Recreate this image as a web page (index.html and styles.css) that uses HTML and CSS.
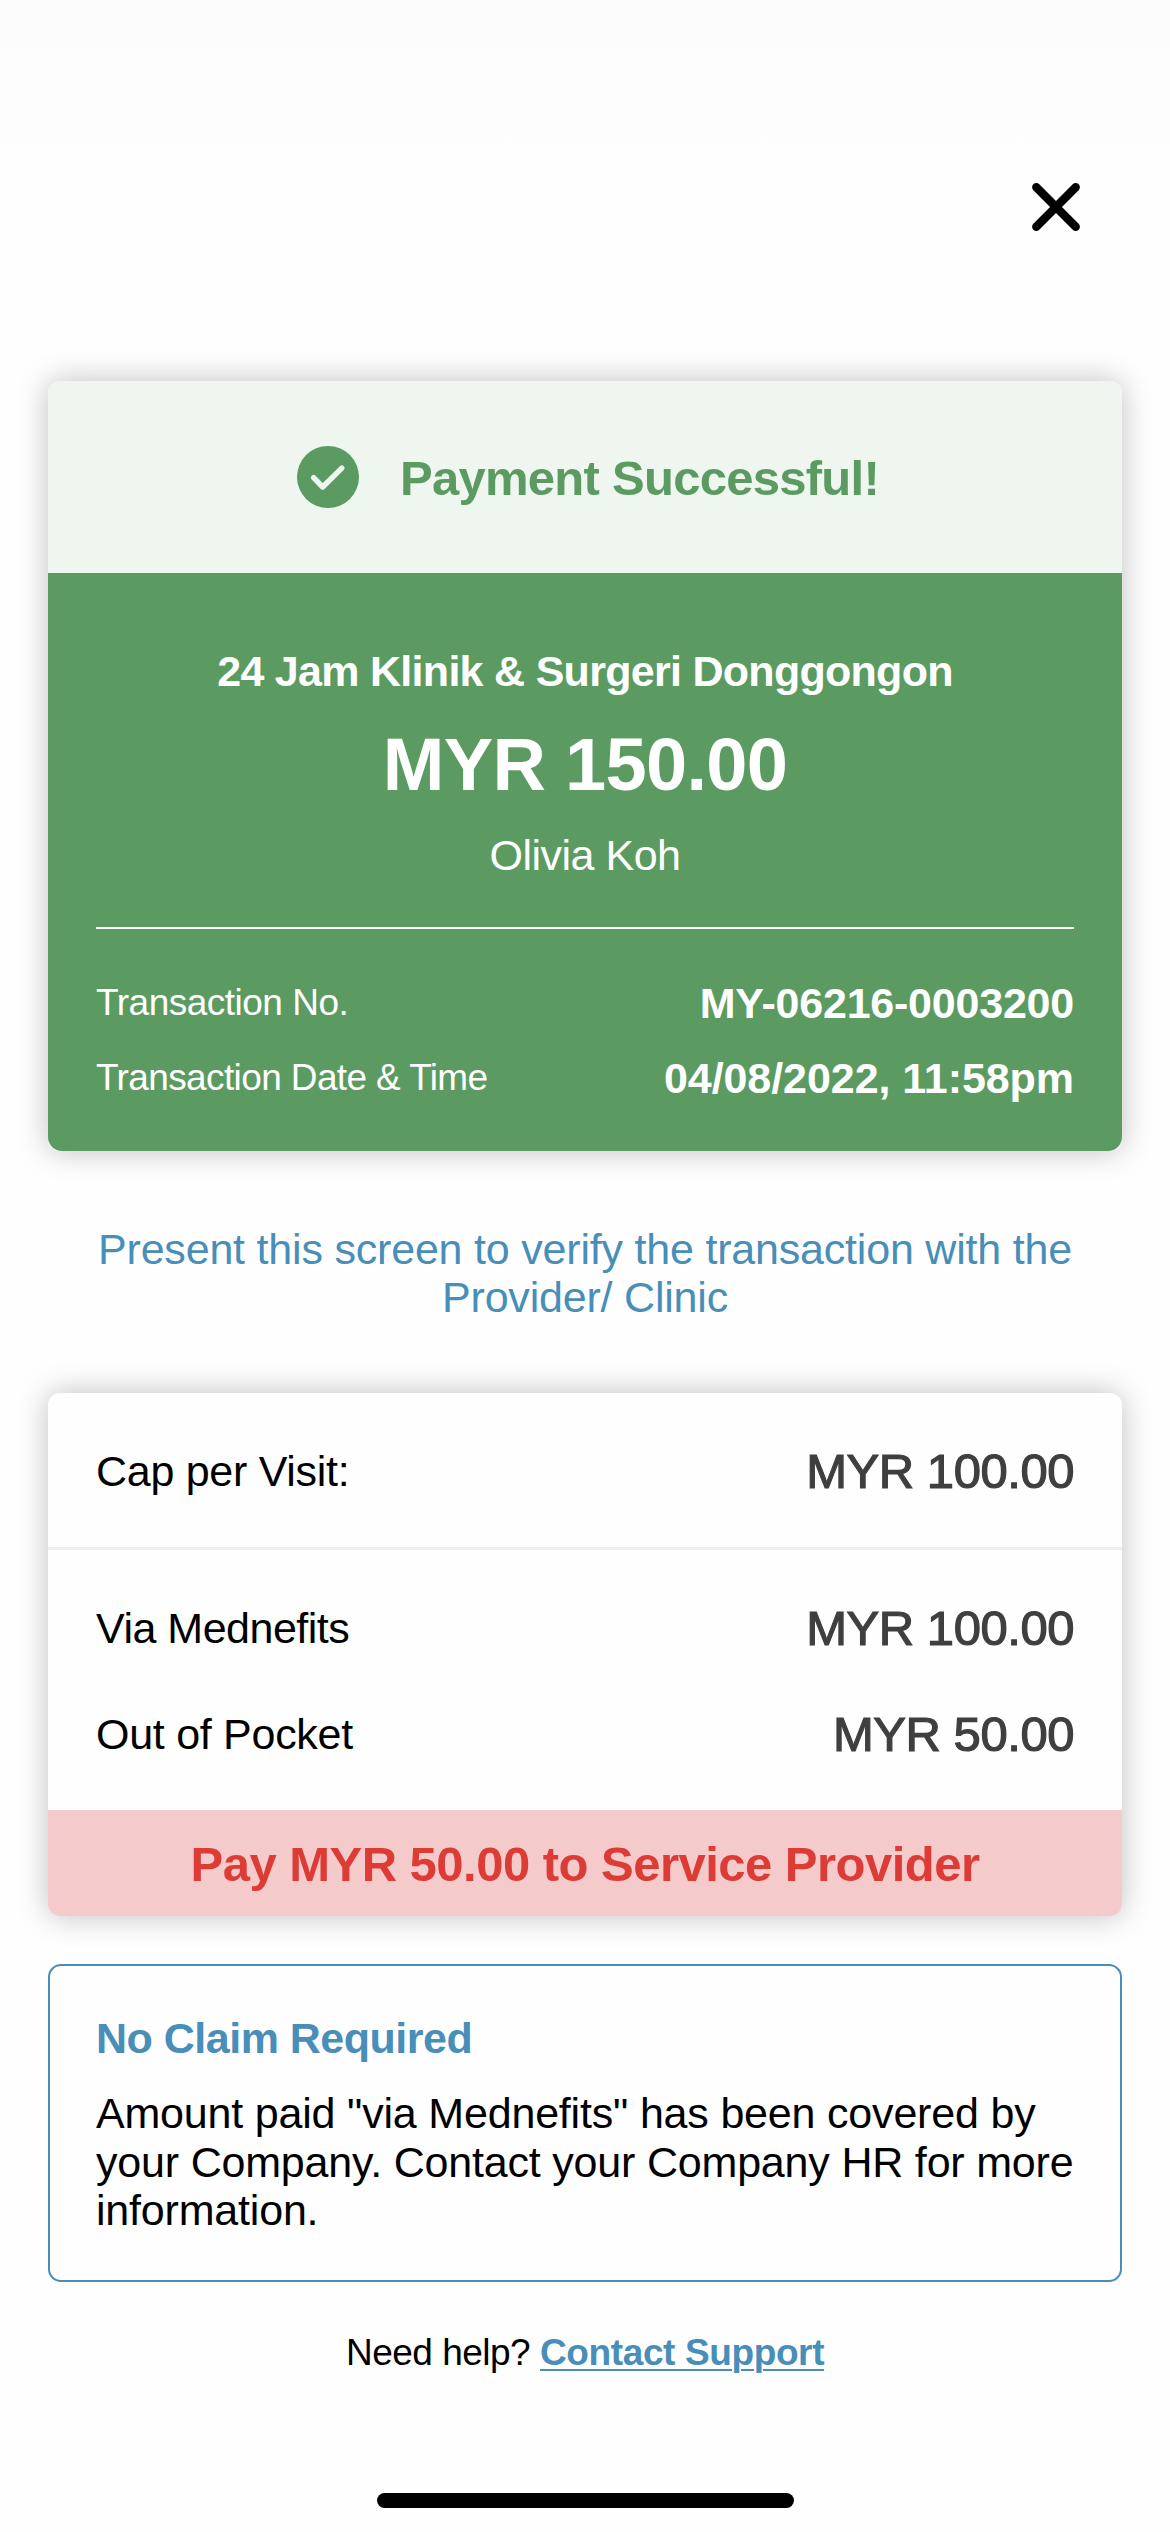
FILE: index.html
```html
<!DOCTYPE html>
<html lang="en">
<head>
  <meta charset="utf-8">
  <title>Payment Successful</title>
  <link rel="stylesheet" href="styles.css">
</head>
<body>
  <main class="screen">
    <header class="topbar">
      <button class="close" aria-label="Close">
        <svg viewBox="0 0 48 48" width="48" height="48" fill="none" stroke="#000" stroke-width="8.4" stroke-linecap="round">
          <path d="M4.3 4.3 43.7 43.7M43.7 4.3 4.3 43.7"/>
        </svg>
      </button>
    </header>

    <section class="card receipt">
      <div class="status">
        <svg class="status-icon" viewBox="0 0 62 62" width="62" height="62">
          <circle cx="31" cy="31" r="31" fill="#5b9b61"/>
          <path d="M16.6 31.6 25.7 41 44.8 22.2" fill="none" stroke="#eef6ef" stroke-width="5.4" stroke-linecap="round" stroke-linejoin="round"/>
        </svg>
        <h1 class="status-text">Payment Successful!</h1>
      </div>
      <div class="receipt-body">
        <p class="clinic">24 Jam Klinik &amp; Surgeri Donggongon</p>
        <p class="amount">MYR 150.00</p>
        <p class="member">Olivia Koh</p>
        <dl class="meta">
          <div class="meta-row">
            <dt class="meta-number-label">Transaction No.</dt>
            <dd class="meta-number">MY-06216-0003200</dd>
          </div>
          <div class="meta-row">
            <dt>Transaction Date &amp; Time</dt>
            <dd>04/08/2022, 11:58pm</dd>
          </div>
        </dl>
      </div>
    </section>

    <p class="hint">Present this screen to verify the transaction with the Provider/ Clinic</p>

    <section class="card breakdown">
      <div class="group">
        <div class="row"><span class="label">Cap per Visit:</span><span class="value">MYR 100.00</span></div>
      </div>
      <div class="group">
        <div class="row"><span class="label label-tight">Via Mednefits</span><span class="value">MYR 100.00</span></div>
        <div class="row"><span class="label">Out of Pocket</span><span class="value">MYR 50.00</span></div>
      </div>
      <p class="pay">Pay MYR 50.00 to Service Provider</p>
    </section>

    <section class="notice">
      <h2 class="notice-title">No Claim Required</h2>
      <p class="notice-text">Amount paid "via Mednefits" has been covered by your Company. Contact your Company HR for more information.</p>
    </section>

    <p class="help">Need help? <a class="help-link" href="#">Contact Support</a></p>
    <div class="home-bar"></div>
  </main>
</body>
</html>
```
FILE: styles.css
```css
* {
  box-sizing: border-box;
  margin: 0;
  padding: 0;
}

body {
  background: #fefefe;
  color: #000;
  font-family: "Liberation Sans", Arial, sans-serif;
  font-size: 43px;
  line-height: 48px;
}

.screen {
  display: flex;
  flex-direction: column;
  height: 2532px;
  padding: 0 48px;
  background: linear-gradient(#fcfcfc, #fefefe 190px);
}

.topbar {
  display: flex;
  justify-content: flex-end;
  height: 381px;
  padding: 183px 42px 0 0;
}

.close {
  width: 48px;
  height: 48px;
  border: 0;
  background: none;
}

.close svg {
  display: block;
}

.card {
  border-radius: 12px;
  box-shadow: 0 0 30px rgba(0, 0, 0, 0.25);
}

.status {
  display: flex;
  align-items: center;
  justify-content: center;
  gap: 41px;
  height: 192px;
  padding-left: 6px;
  border-radius: 12px 12px 0 0;
  background: #eef6ef;
}

.status-text {
  padding-top: 2px;
  color: #5b9b61;
  font-size: 49px;
  letter-spacing: -0.73px;
}

.receipt-body {
  padding: 74px 48px 49px;
  border-radius: 0 0 14px 14px;
  background: #5b9b61;
  color: #fff;
  text-align: center;
}

.clinic {
  font-weight: bold;
  letter-spacing: -0.71px;
}

.amount {
  margin: 28px 0 24px;
  font-size: 74px;
  font-weight: bold;
  line-height: 84px;
  letter-spacing: -0.69px;
}

.member {
  letter-spacing: -0.5px;
}

.meta {
  display: flex;
  flex-direction: column;
  gap: 27px;
  margin-top: 48px;
  padding-top: 50px;
  border-top: 2px solid #fff;
}

.meta-row {
  display: flex;
  justify-content: space-between;
  height: 48px;
}

.meta-row dt {
  font-size: 37px;
  line-height: 48px;
  letter-spacing: -0.62px;
}

.meta-row .meta-number-label {
  letter-spacing: -0.5px;
}

.meta-row dd {
  font-weight: bold;
  letter-spacing: -0.06px;
}

.meta-row .meta-number {
  letter-spacing: -0.22px;
}

.hint {
  margin: 74px 0 72px;
  color: #488eb9;
  text-align: center;
  letter-spacing: -0.2px;
}

.breakdown {
  background: #fefefe;
}

.group {
  display: flex;
  flex-direction: column;
  gap: 58px;
  padding: 54px 48px 52px;
}

.group + .group {
  border-top: 3px solid #eee;
}

.row {
  display: flex;
  justify-content: space-between;
}

.label {
  letter-spacing: -0.28px;
}

.label-tight {
  letter-spacing: -0.5px;
}

/* Stroke thickens the regular face to a medium weight. */
.value {
  color: #3f3f3f;
  font-size: 49px;
  letter-spacing: -0.45px;
  -webkit-text-stroke: 1.2px #3f3f3f;
}

.pay {
  padding: 30px 0 28px;
  border-radius: 0 0 12px 12px;
  background: #f5caca;
  color: #dc3b36;
  font-size: 49px;
  font-weight: bold;
  text-align: center;
  letter-spacing: -0.52px;
}

.notice {
  height: 318px;
  margin-top: 48px;
  padding: 48px 0 0 46px;
  border: 2px solid #488eb9;
  border-radius: 13px;
}

.notice-title {
  margin-bottom: 27px;
  color: #488eb9;
  font-size: 43px;
  letter-spacing: -0.5px;
}

.notice-text {
  line-height: 48.5px;
  letter-spacing: -0.19px;
}

.help {
  margin-top: 49px;
  font-size: 37px;
  line-height: 44px;
  text-align: center;
  letter-spacing: -0.5px;
}

.help-link {
  color: #488eb9;
  font-weight: bold;
  letter-spacing: -0.38px;
  text-decoration-thickness: 2px;
  text-underline-offset: 4px;
}

.home-bar {
  width: 417px;
  height: 15px;
  margin: 118px auto 0;
  border-radius: 8px;
  background: #000;
}
```
